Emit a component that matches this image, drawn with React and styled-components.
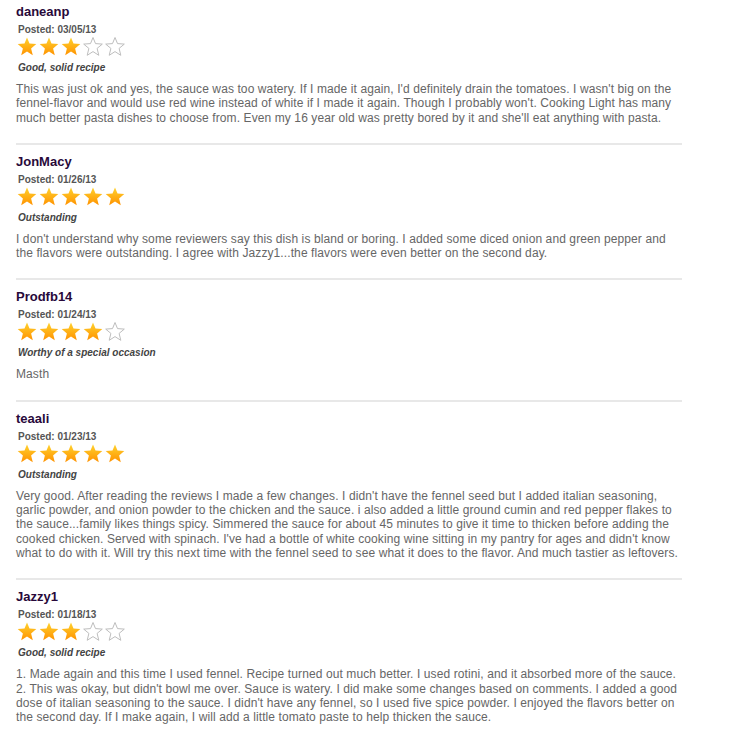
import React from 'react';
import styled, { createGlobalStyle } from 'styled-components';

const GlobalStyle = createGlobalStyle`
  body {
    margin: 0;
    background: #fff;
    font-family: Arial, "Liberation Sans", sans-serif;
  }
`;

const List = styled.div`
  width: 666px;
  padding: 0 0 0 16px;
`;

const Review = styled.div`
  padding: ${(p) => (p.first ? '4px' : '9px')} 0 18px 0;
  border-bottom: 2px solid #e8e8e8;
`;

const Name = styled.div`
  font-size: 13px;
  line-height: 16px;
  font-weight: bold;
  color: #28093a;
`;

const Posted = styled.div`
  margin-top: 4px;
  font-size: 10px;
  line-height: 12px;
  font-weight: bold;
  color: #555;
  padding-left: 2px;
`;

const Stars = styled.div`
  display: flex;
  gap: 2px;
  margin-top: 1px;
  height: 19px;
  padding-left: 1px;
`;

const Label = styled.div`
  margin-top: 6px;
  font-size: 10px;
  line-height: 12px;
  font-weight: bold;
  font-style: italic;
  color: #444;
  padding-left: 2px;
`;

const Body = styled.p`
  margin: 8px 0 0 0;
  font-size: 12px;
  line-height: 14.3px;
  letter-spacing: 0.1px;
  color: #666;
`;

const Star = ({ filled, id }) => (
  <svg width="20" height="19" viewBox="0 0 20 19">
    <defs>
      <linearGradient id={id} x1="0" y1="0" x2="0" y2="1">
        <stop offset="0%" stopColor="#ffd22e" />
        <stop offset="100%" stopColor="#ff9200" />
      </linearGradient>
    </defs>
    <polygon
      points="10,0.5 12.5,6.6 19.3,7.1 14.1,11.4 15.8,18.3 10,14.6 4.2,18.3 5.9,11.4 0.7,7.1 7.5,6.6"
      fill={filled ? `url(#${id})` : '#fff'}
      stroke={filled ? 'none' : '#bdbdbd'}
      strokeWidth="1"
    />
  </svg>
);

const reviews = [
  {
    name: 'daneanp',
    date: '03/05/13',
    rating: 3,
    label: 'Good, solid recipe',
    text: "This was just ok and yes, the sauce was too watery. If I made it again, I'd definitely drain the tomatoes. I wasn't big on the fennel-flavor and would use red wine instead of white if I made it again. Though I probably won't. Cooking Light has many much better pasta dishes to choose from. Even my 16 year old was pretty bored by it and she'll eat anything with pasta.",
  },
  {
    name: 'JonMacy',
    date: '01/26/13',
    rating: 5,
    label: 'Outstanding',
    text: "I don't understand why some reviewers say this dish is bland or boring. I added some diced onion and green pepper and the flavors were outstanding. I agree with Jazzy1...the flavors were even better on the second day.",
  },
  {
    name: 'Prodfb14',
    date: '01/24/13',
    rating: 4,
    label: 'Worthy of a special occasion',
    text: 'Masth',
  },
  {
    name: 'teaali',
    date: '01/23/13',
    rating: 5,
    label: 'Outstanding',
    text: "Very good. After reading the reviews I made a few changes. I didn't have the fennel seed but I added italian seasoning, garlic powder, and onion powder to the chicken and the sauce. i also added a little ground cumin and red pepper flakes to the sauce...family likes things spicy. Simmered the sauce for about 45 minutes to give it time to thicken before adding the cooked chicken. Served with spinach. I've had a bottle of white cooking wine sitting in my pantry for ages and didn't know what to do with it. Will try this next time with the fennel seed to see what it does to the flavor. And much tastier as leftovers.",
  },
  {
    name: 'Jazzy1',
    date: '01/18/13',
    rating: 3,
    label: 'Good, solid recipe',
    text: "1. Made again and this time I used fennel. Recipe turned out much better. I used rotini, and it absorbed more of the sauce.\n2. This was okay, but didn't bowl me over. Sauce is watery. I did make some changes based on comments. I added a good dose of italian seasoning to the sauce. I didn't have any fennel, so I used five spice powder. I enjoyed the flavors better on the second day. If I make again, I will add a little tomato paste to help thicken the sauce.",
  },
];

export default function App() {
  return (
    <>
      <GlobalStyle />
      <List>
        {reviews.map((r, i) => (
          <Review key={r.name} first={i === 0}>
            <Name>{r.name}</Name>
            <Posted>Posted: {r.date}</Posted>
            <Stars>
              {[0, 1, 2, 3, 4].map((s) => (
                <Star key={s} filled={s < r.rating} id={`g${i}${s}`} />
              ))}
            </Stars>
            <Label>{r.label}</Label>
            <Body>
              {r.text.split('\n').map((line, k) => (
                <React.Fragment key={k}>
                  {k > 0 && <br />}
                  {line}
                </React.Fragment>
              ))}
            </Body>
          </Review>
        ))}
      </List>
    </>
  );
}
